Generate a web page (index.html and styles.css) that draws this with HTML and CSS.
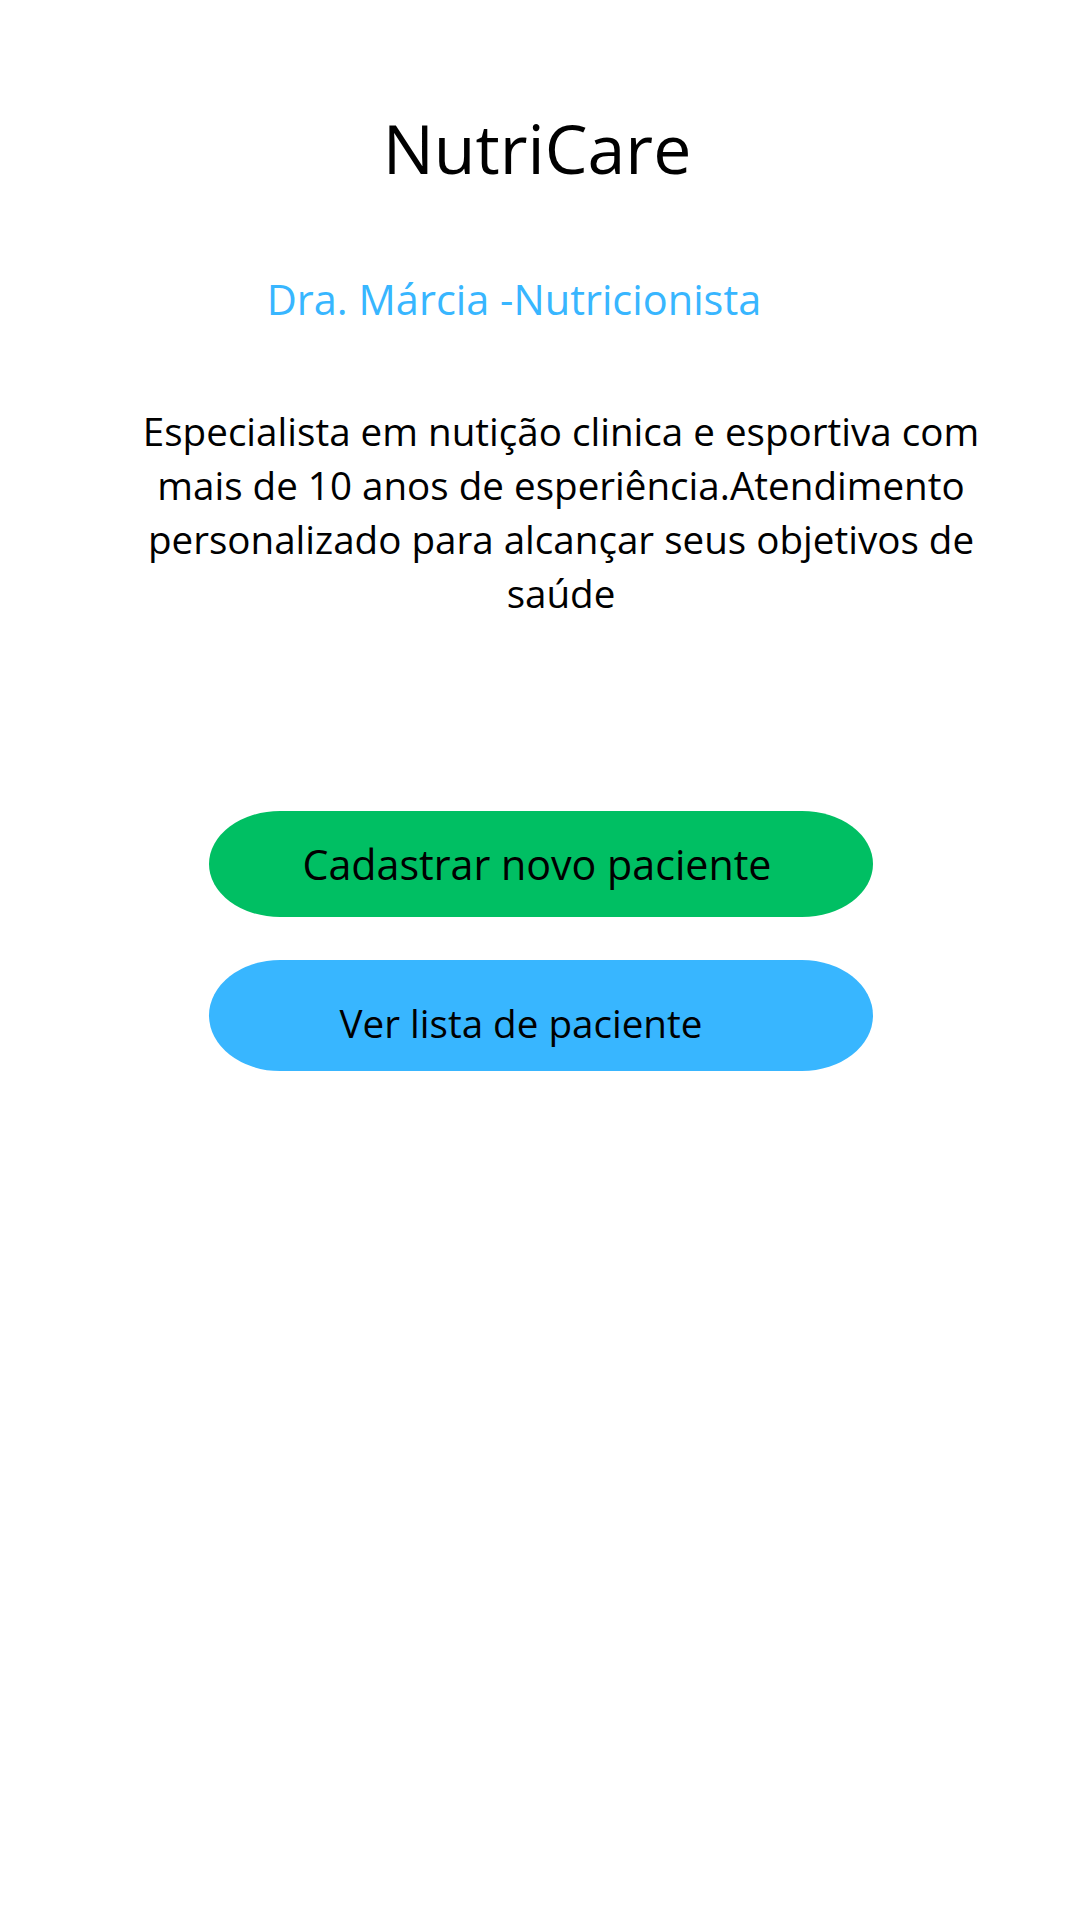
FILE: index.html
```html
<!DOCTYPE html>
<html lang="pt">
<head>
<meta charset="utf-8">
<title>NutriCare</title>
<link rel="stylesheet" href="styles.css">
</head>
<body>
<main class="page">
  <h1 class="title">NutriCare</h1>
  <h2 class="subtitle">Dra. Márcia -Nutricionista</h2>
  <p class="about">Especialista em nutição clinica e esportiva com mais de 10 anos de esperiência.Atendimento personalizado para alcançar seus objetivos de saúde</p>
  <div class="actions">
    <button class="btn btn-green">Cadastrar novo paciente</button>
    <button class="btn btn-blue">Ver lista de paciente</button>
  </div>
</main>
</body>
</html>
```

FILE: styles.css
```css
html, body {
  margin: 0;
  padding: 0;
  background: #ffffff;
}

body {
  font-family: "Open Sans", "Noto Sans", sans-serif;
  color: #000000;
  width: 1080px;
  height: 1920px;
}

.page {
  display: flex;
  flex-direction: column;
  padding-top: 102px;
}

.title {
  margin: 0;
  font-size: 68px;
  font-weight: 400;
  line-height: 92px;
  text-align: center;
  padding-right: 6px;
}

.subtitle {
  margin: 77px 0 0 0;
  font-size: 41.5px;
  font-weight: 400;
  line-height: 57px;
  color: #38b6ff;
  text-align: center;
  padding-right: 52px;
}

.about {
  margin: 76px 0 0 126px;
  width: 870px;
  font-size: 38.6px;
  line-height: 54px;
  text-align: center;
}

.actions {
  display: flex;
  flex-direction: column;
  gap: 43px;
  margin-top: 191px;
  padding-left: 209px;
}

.btn {
  width: 664px;
  border: none;
  border-radius: 71px / 50%;
  font-family: "Open Sans", "Noto Sans", sans-serif;
  color: #000000;
  padding: 0;
  text-align: center;
}

.btn-green {
  height: 106px;
  font-size: 41.2px;
  background: #00bf63;
  padding-right: 8px;
}

.btn-blue {
  height: 111px;
  font-size: 38.6px;
  background: #38b6ff;
  padding-right: 40px;
  padding-top: 14px;
}
```
